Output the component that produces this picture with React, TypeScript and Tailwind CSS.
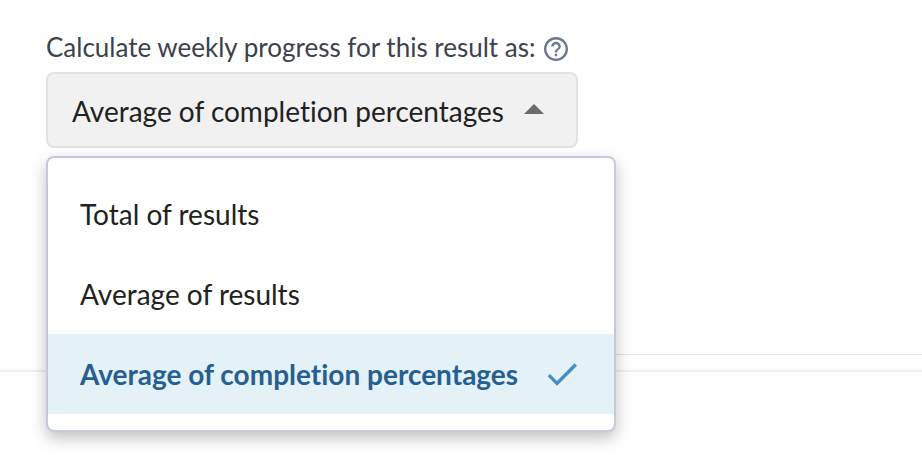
import { useState } from 'react';
import { clsx } from 'clsx';
import { MdCheck } from 'react-icons/md';

const options = ['Total of results', 'Average of results', 'Average of completion percentages'];

function HelpIcon() {
  return (
    <svg viewBox="2 2 20 20" className="size-6" fill="currentColor" aria-hidden="true">
      <path d="M11 18h2v-2h-2v2zm1-16C6.480 2 2 6.480 2 12s4.480 10 10 10 10-4.480 10-10S17.520 2 12 2zm0 18c-4.410 0-8-3.590-8-8s3.590-8 8-8 8 3.590 8 8-3.590 8-8 8zm0-14c-2.210 0-4 1.790-4 4h2c0-1.100.9-2 2-2s2 .9 2 2c0 2-3 1.750-3 5h2c0-2.250 3-2.500 3-5 0-2.210-1.790-4-4-4z" />
    </svg>
  );
}

function Caret({ open }: { open: boolean }) {
  return (
    <svg viewBox="0 0 20 10" className={clsx('mb-1 h-2.5 w-5', !open && 'rotate-180')} fill="#6b6b6b" aria-hidden="true">
      <path d="M0 10L10 0l10 10z" />
    </svg>
  );
}

export default function App() {
  const [open, setOpen] = useState(true);
  const [selected, setSelected] = useState(options[2]);

  const choose = (option: string) => {
    setSelected(option);
    setOpen(false);
  };

  return (
    <main className="min-h-screen bg-white font-['Lato',sans-serif] text-[#222] [font-variant-ligatures:none]">
      <section className="border-b-2 border-[#eee] pb-[15px] pl-[46px] pt-8">
        <div className="min-h-[323px] border-b border-[#e2e2e2]">
          <div className="flex items-center gap-2">
            <label htmlFor="progress-method" className="text-[26px] leading-[30px] text-[#3b424d]">
              Calculate weekly progress for this result as:
            </label>
            <button type="button" aria-label="Help" className="mt-1 text-[#6b788e]">
              <HelpIcon />
            </button>
          </div>

          <div className="relative mt-2.5 w-fit">
            <button
              id="progress-method"
              type="button"
              aria-haspopup="listbox"
              aria-expanded={open}
              onClick={() => setOpen(!open)}
              className="flex h-19 items-center gap-5 rounded-lg border-2 border-[#e2e2e2] bg-[#f1f1f1] pl-6 pr-8 pt-0.5 text-[28px] leading-9"
            >
              {selected}
              <Caret open={open} />
            </button>

            {open && (
              <ul
                role="listbox"
                aria-labelledby="progress-method"
                className="absolute left-0 top-full mt-2 whitespace-nowrap rounded-lg border-2 border-[#c5cadb] bg-white py-4 text-[28px] leading-9 shadow-[0_6px_16px_rgba(0,0,0,0.25)]"
              >
                {options.map((option) => (
                  <li
                    key={option}
                    role="option"
                    tabIndex={0}
                    aria-selected={option === selected}
                    onClick={() => choose(option)}
                    onKeyDown={(e) => e.key === 'Enter' && choose(option)}
                    className={clsx(
                      'flex h-20 cursor-pointer items-center gap-6 px-8',
                      option === selected && 'bg-[#e4f1f7] font-bold text-[#265f90]',
                    )}
                  >
                    {option}
                    {option === selected && <MdCheck className="size-10 text-[#448ec6]" />}
                  </li>
                ))}
              </ul>
            )}
          </div>
        </div>
      </section>
    </main>
  );
}
